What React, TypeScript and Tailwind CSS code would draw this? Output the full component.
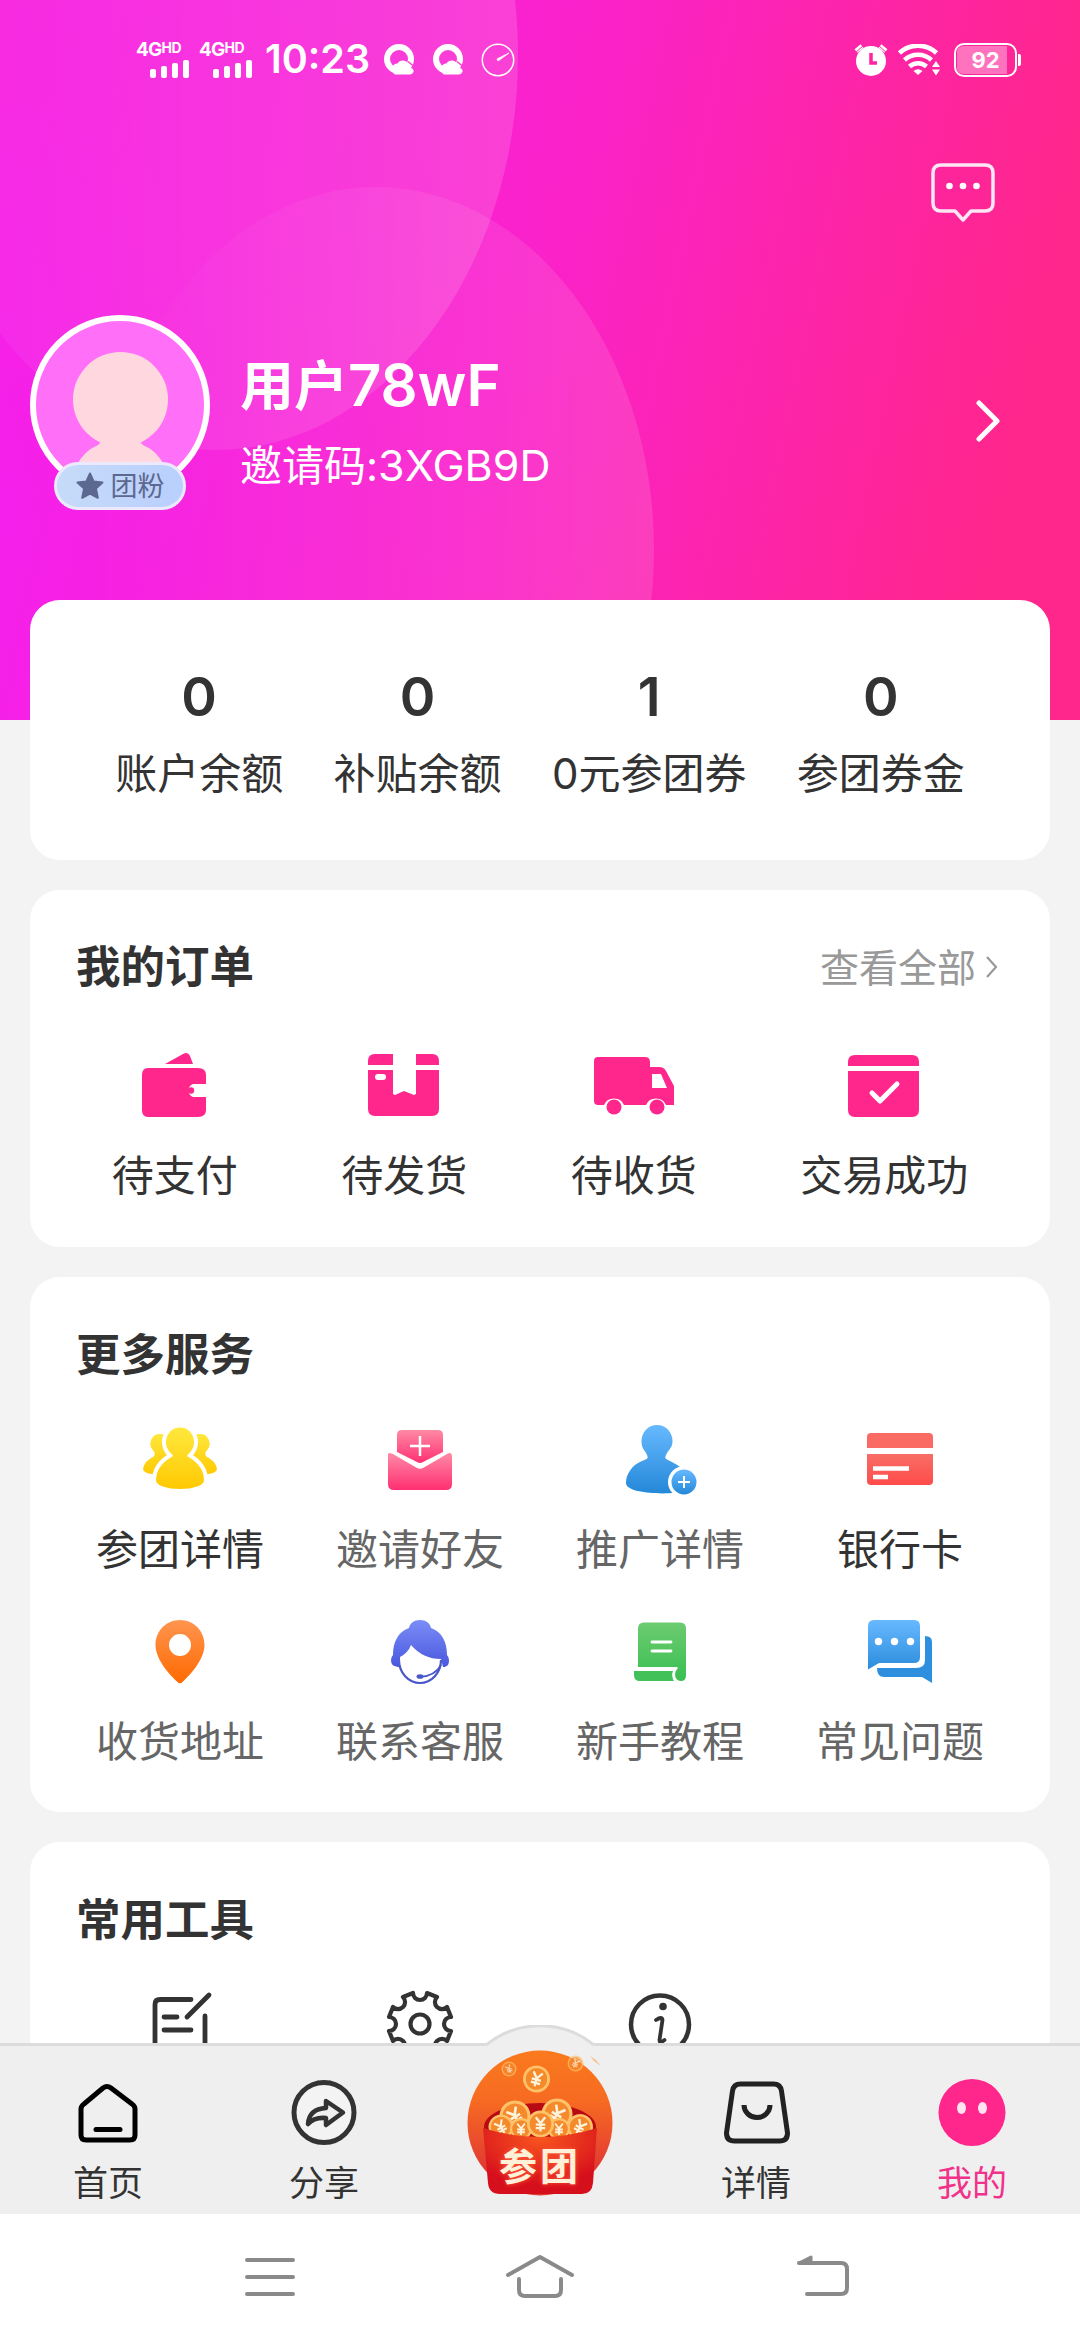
import type { ReactNode } from 'react';
import { clsx } from 'clsx';

const PINK = '#ff268c';

function Gradient({ id, from, to }: { id: string; from: string; to: string }) {
  return (
    <defs>
      <linearGradient id={id} x1="0" y1="0" x2="0" y2="1">
        <stop offset="0" stopColor={from} />
        <stop offset="1" stopColor={to} />
      </linearGradient>
    </defs>
  );
}

/* ---------- status bar ---------- */

function Signal() {
  return (
    <div className="flex h-[36px] w-[56px] flex-col justify-between text-white">
      <div className="flex h-[15px] items-start">
        <span className="text-[19px] leading-[16px] font-bold tracking-[-0.8px]">4G</span>
        <span className="text-[14px] leading-[12px] font-bold tracking-[-0.5px]">HD</span>
      </div>
      <div className="ml-[14px] flex items-end gap-[5px]">
        <i className="h-[9px] w-[6px] rounded-[2px] bg-white" />
        <i className="h-[12px] w-[6px] rounded-[2px] bg-white" />
        <i className="h-[15px] w-[6px] rounded-[2px] bg-white" />
        <i className="h-[18px] w-[6px] rounded-[2px] bg-white" />
      </div>
    </div>
  );
}

function BrowserIcon() {
  return (
    <svg width="30" height="31" viewBox="0 0 30 31" fill="none">
      <circle cx="15" cy="15" r="12" stroke="#fff" strokeWidth="6" />
      <path d="M11 30.500a6 6 0 0 1 0-10.500q1-.6 2.500-.5a6 6 0 0 1 10.500 0l3 4.500q3 1 2.500 3.500t-4 3z" fill="#fff" />
      <path d="M24 17.500l6 5" stroke="#fa40d6" strokeWidth="1.500" />
    </svg>
  );
}

function StatusBar() {
  return (
    <div className="flex h-[119px] items-center pr-[63px] pl-[136px]">
      <Signal />
      <div className="w-[7px]" />
      <Signal />
      <span className="ml-[10px] w-[108px] text-[39.5px] leading-none font-semibold whitespace-nowrap text-white">10:23</span>
      <div className="ml-[11px] flex items-center">
        <BrowserIcon />
        <div className="w-[19px]" />
        <BrowserIcon />
        <svg className="ml-[18px]" width="34" height="34" viewBox="0 0 34 34" fill="none">
          <circle cx="17" cy="17" r="15.700" stroke="#fff" strokeWidth="1.500" />
          <path d="M16 16l12-6-11 8z" fill="#fff" stroke="#fff" strokeWidth=".8" />
        </svg>
      </div>
      <div className="ml-auto flex items-center">
        <svg width="34" height="32" viewBox="0 0 34 32" fill="none">
          <circle cx="17" cy="17" r="15" fill="#fff" />
          <path d="M2 7l6-5M32 7l-6-5" stroke="#fff" strokeWidth="4.500" />
          <path d="M0 10l10-9M34 10L24 1" stroke="#ff24a4" strokeWidth="1" />
          <path d="M17 9v10h6" stroke="#ff24a4" strokeWidth="3.500" />
        </svg>
        <svg className="ml-[10px]" width="42" height="32" viewBox="0 0 42 32" fill="none">
          <g stroke="#fff" strokeWidth="4.500">
            <path d="M1.500 9a27 27 0 0 1 37 0" />
            <path d="M6.500 16a20 20 0 0 1 27 0" />
            <path d="M11.500 22.500a12.500 12.500 0 0 1 17 0" />
          </g>
          <path d="M15.500 27q4.500-3.500 9 0L20 31z" fill="#fff" />
          <path d="M34 23l4-6 4 6zM34 25.500h8l-4 6z" fill="#fff" />
        </svg>
        <div className="relative ml-[14px] flex h-[34px] w-[63px] items-center justify-center rounded-[10px] border-[2.5px] border-white p-px">
          <div className="absolute inset-y-[1px] left-[1px] w-[50px] rounded-l-[6px] bg-[#ff72bd]" />
          <div className="absolute top-[9px] -right-[6px] h-[12px] w-[3px] rounded-r-[2px] bg-white" />
          <span className="relative text-[22px] leading-none font-bold text-white">92</span>
        </div>
      </div>
    </div>
  );
}

/* ---------- header ---------- */

function HeaderBackdrop() {
  return (
    <svg className="absolute inset-0" width="1080" height="720" viewBox="0 0 1080 720">
      <defs>
        <linearGradient id="hero" gradientUnits="userSpaceOnUse" x1="20" y1="250" x2="1010" y2="460">
          <stop offset="0" stopColor="#f520ee" />
          <stop offset=".5" stopColor="#fa22ca" />
          <stop offset="1" stopColor={PINK} />
        </linearGradient>
        <radialGradient id="glow" gradientUnits="userSpaceOnUse" cx="0" cy="0" r="520">
          <stop offset="0" stopColor="#ff22b0" stopOpacity=".25" />
          <stop offset="1" stopColor="#ff22b0" stopOpacity="0" />
        </radialGradient>
        <linearGradient id="bubble" x1="0" y1=".5" x2="1" y2=".5">
          <stop offset="0" stopColor="#fff" stopOpacity=".03" />
          <stop offset="1" stopColor="#fff" stopOpacity=".14" />
        </linearGradient>
        <linearGradient id="bubble2" x1="0" y1=".5" x2="1" y2=".5">
          <stop offset="0" stopColor="#fff" stopOpacity="0" />
          <stop offset="1" stopColor="#fff" stopOpacity=".12" />
        </linearGradient>
      </defs>
      <rect width="1080" height="720" fill="url(#hero)" />
      <rect width="1080" height="720" fill="url(#glow)" />
      <ellipse cx="215" cy="55" rx="303" ry="395" fill="url(#bubble)" />
      <ellipse cx="376" cy="550" rx="278" ry="363" fill="url(#bubble2)" />
    </svg>
  );
}

function Avatar() {
  return (
    <div className="relative h-[195px] w-[180px]">
      <svg width="180" height="180" viewBox="0 0 180 180">
        <clipPath id="face">
          <circle cx="90" cy="90" r="86" />
        </clipPath>
        <circle cx="90" cy="90" r="87" fill="#ff6ff8" />
        <g clipPath="url(#face)" fill="#ffd8df">
          <circle cx="90.500" cy="84.500" r="47.500" />
          <path d="M68 122h45q-4 6 0 8 14 6 21 20v30H47v-30q7-14 21-20 4-2 0-8z" />
        </g>
        <circle cx="90" cy="90" r="87" fill="none" stroke="#fff" strokeWidth="6" />
      </svg>
      <div className="absolute top-[147px] left-[24px] flex h-[48px] w-[132px] items-center justify-center gap-[7px] rounded-full border-[3px] border-[#ece9ff] bg-linear-to-r from-[#c6dbf8] to-[#b9cffd]">
        <svg width="28" height="28" viewBox="0 0 28 28">
          <path
            d="M14 1.500l3.600 8 8.900 1-6.600 6 1.900 9.300-7.800-4.300-7.800 4.300 1.900-9.300-6.600-6 8.900-1z"
            fill="#5d6890"
            stroke="#5d6890"
            strokeWidth="2"
            strokeLinejoin="round"
          />
        </svg>
        <span className="text-[27px] leading-none text-[#5d6890]">团粉</span>
      </div>
    </div>
  );
}

function Header() {
  return (
    <header className="relative h-[600px] shrink-0">
      <HeaderBackdrop />
      <div className="relative flex h-full flex-col">
        <StatusBar />
        <div className="flex h-[196px] justify-end pt-[43px] pr-[84px]">
          <svg width="66" height="62" viewBox="0 0 66 62" fill="none">
            <path
              d="M11 3h44q8 0 8 8v30q0 8-8 8H41l-8 9-8-9H11q-8 0-8-8V11q0-8 8-8z"
              stroke="#ffe6f4"
              strokeWidth="3.500"
              strokeLinejoin="round"
            />
            <g fill="#fff">
              <circle cx="19.500" cy="24" r="3.300" />
              <circle cx="33" cy="24" r="3.300" />
              <circle cx="46.500" cy="24" r="3.300" />
            </g>
          </svg>
        </div>
        <div className="flex pr-[79px] pl-[30px]">
          <Avatar />
          <div className="ml-[30px] flex flex-col text-white">
            <div className="mt-[41px] h-[62px] text-[54px] leading-[62px] font-semibold">
              用户<span className="text-[58px] leading-[0px]">78wF</span>
            </div>
            <div className="mt-[22px] h-[52px] text-[42px] leading-[52px]">
              邀请码:<span className="text-[43px] leading-[0px]">3XGB9D</span>
            </div>
          </div>
          <svg className="mt-[85px] ml-auto" width="26" height="42" viewBox="0 0 26 42" fill="none">
            <path d="M4 3l18 18L4 39" stroke="#fff" strokeWidth="5" strokeLinecap="round" strokeLinejoin="round" />
          </svg>
        </div>
      </div>
    </header>
  );
}

/* ---------- cards ---------- */

function Card({ className, children }: { className?: string; children: ReactNode }) {
  return <section className={clsx('relative mx-[30px] shrink-0 rounded-[30px] bg-white', className)}>{children}</section>;
}

function Title({ children }: { children: ReactNode }) {
  return <h2 className="text-[44.5px] leading-[60px] font-semibold text-[#333]">{children}</h2>;
}

const stats = [
  { value: '0', label: '账户余额' },
  { value: '0', label: '补贴余额' },
  { value: '1', label: '0元参团券' },
  { value: '0', label: '参团券金' },
];

function Stats() {
  return (
    <Card className="flex h-[260px] justify-around px-[60px] pt-[67px]">
      {stats.map((s) => (
        <div key={s.label} className="flex flex-col items-center text-[#333]">
          <span className="text-[54px] leading-[60px] font-semibold">{s.value}</span>
          <span className="mt-[19px] text-[42px] leading-[56px]">{s.label}</span>
        </div>
      ))}
    </Card>
  );
}

const orders = [
  {
    label: '待支付',
    icon: (
      <g fill={PINK}>
        <path d="M31 19L49 9q5-2.500 7 2l3 8z" />
        <path d="M14 23h50q8 0 8 7v9H59a7 7 0 0 0 0 13h13v13q0 7-8 7H14q-6 0-6-7V30q0-7 6-7z" />
        <circle cx="57" cy="45.500" r="3.200" />
      </g>
    ),
  },
  {
    label: '待发货',
    icon: (
      <g fill={PINK}>
        <path d="M12 9h18v11H5v-4q0-7 7-7zM53 9h16q7 0 7 7v4H53z" />
        <path
          fillRule="evenodd"
          d="M5 25h25v24l2 1 9-4 10 4 2-1V25h23v39q0 7-7 7H12q-7 0-7-7zm10 4h5q3 0 3 3t-3 3h-5q-3 0-3-3t3-3z"
        />
      </g>
    ),
  },
  {
    label: '待收货',
    icon: (
      <g fill={PINK}>
        <path
          fillRule="evenodd"
          d="M5 12h47q5 0 5 5v5h9q5 0 7 4l8 15v19H73a11 11 0 0 0-20 0H31a11 11 0 0 0-20 0H5q-4 0-4-4V16q0-4 4-4zm54 17v14h15l-6-14z"
        />
        <circle cx="21" cy="62" r="7.500" />
        <circle cx="64" cy="62" r="7.500" />
      </g>
    ),
  },
  {
    label: '交易成功',
    icon: (
      <>
        <path d="M12 10h57q7 0 7 7v4H5v-4q0-7 7-7zM5 26h71v39q0 7-7 7H12q-7 0-7-7z" fill={PINK} />
        <path d="M29 48l8 8 17-17" fill="none" stroke="#fff" strokeWidth="5" strokeLinecap="round" strokeLinejoin="round" />
      </>
    ),
  },
];

function Orders() {
  return (
    <Card className="mt-[30px] h-[357px] pt-[47px]">
      <div className="flex items-center justify-between pr-[51px] pl-[46px]">
        <Title>我的订单</Title>
        <div className="flex items-center text-[39px] leading-none text-[#999]">
          查看全部
          <svg className="ml-[9px]" width="14" height="24" viewBox="0 0 14 24" fill="none">
            <path d="M2 2l9 10-9 10" stroke="#999" strokeWidth="2.200" />
          </svg>
        </div>
      </div>
      <div className="flex justify-around px-[30px] pt-[48px]">
        {orders.map((o) => (
          <div key={o.label} className="flex flex-col items-center text-[42px] leading-[56px] text-[#333]">
            <svg width="82" height="80" viewBox="0 0 82 80">
              {o.icon}
            </svg>
            <span className="mt-[23px]">{o.label}</span>
          </div>
        ))}
      </div>
    </Card>
  );
}

const services = [
  {
    label: '参团详情',
    dark: true,
    icon: (
      <>
        <Gradient id="yellow" from="#ffe93f" to="#ffc800" />
        <g fill="url(#yellow)" stroke="#fff" strokeWidth="4">
          <path d="M21 12c-11-1-16 12-10 19 3 3 2 4-2 6-7 4-9 12-7 15 4 5 17 5 27 3l6-36q-7-7-14-7z" />
          <path d="M59 12c11-1 16 12 10 19-3 3-2 4 2 6 7 4 9 12 7 15-4 5-17 5-27 3l-6-36q7-7 14-7z" />
          <path d="M40 5.500c-10 0-16 8-16 17 0 6 3 10 6 13-10 6-16 14-16 25 0 14 52 14 52 0 0-11-6-19-16-25 3-3 6-7 6-13 0-9-6-17-16-17z" />
        </g>
      </>
    ),
  },
  {
    label: '邀请好友',
    icon: (
      <>
        <Gradient id="rose" from="#ff8aa5" to="#ff2f72" />
        <path d="M22 10h36q5 0 5 5v17L43 42q-3 2-6 0L17 32V15q0-5 5-5z" fill="url(#rose)" />
        <path d="M9 33q2 0 4 1l24 14q3 1.500 6 0l24-14q5-3 5 3v27q0 6-6 6H14q-6 0-6-6V35q0-2 1-2z" fill="url(#rose)" />
        <path d="M40 16v20M30 26h20" stroke="#fff" strokeWidth="2.500" />
      </>
    ),
  },
  {
    label: '推广详情',
    icon: (
      <>
        <Gradient id="blue" from="#67b9ff" to="#2488d8" />
        <path
          d="M37 5c-9 0-15.500 7.500-15.500 16 0 6 2 8 4.500 12 3 5 2 6-4 8C12 45 6 54 6 63c0 12 50 12 56 8V48q-6-4-12-7c-5-2-6-3-3-8 2.500-4 5.500-6 5.500-12C52.500 12.500 46 5 37 5z"
          fill="url(#blue)"
        />
        <circle cx="64" cy="62" r="16" fill="#fff" />
        <circle cx="64" cy="62" r="12.500" fill="url(#blue)" />
        <path d="M64 56v12M58 62h12" stroke="#fff" strokeWidth="2" />
      </>
    ),
  },
  {
    label: '银行卡',
    dark: true,
    icon: (
      <>
        <Gradient id="red" from="#f86e66" to="#ff4b4b" />
        <path d="M11 13h58q4 0 4 4v11H7V17q0-4 4-4z" fill="#f96b63" />
        <path d="M7 34h66v27q0 4-4 4H11q-4 0-4-4z" fill="url(#red)" />
        <path d="M13 48.500h36M13 57h15" stroke="#fff" strokeWidth="4.500" />
      </>
    ),
  },
  {
    label: '收货地址',
    icon: (
      <>
        <Gradient id="orange" from="#ff9550" to="#ff6a00" />
        <path
          d="M40 8C26 8 15.500 19 15.500 33c0 13 12 28 22 37q2.500 2.500 5 0c10-9 22-24 22-37C64.500 19 54 8 40 8zm0 14a11 11 0 1 1 0 22 11 11 0 0 1 0-22z"
          fillRule="evenodd"
          fill="url(#orange)"
        />
      </>
    ),
  },
  {
    label: '联系客服',
    icon: (
      <>
        <Gradient id="indigo" from="#7b8df8" to="#4a58dd" />
        <path d="M19 48a21 23 0 0 0 42 0" fill="none" stroke="#4a57c8" strokeWidth="2.200" />
        <path
          d="M40 8c6 0 10 3 11 8 11 4 16 14 16 27q2 2 2 5c0 5-2 7-6 7l-2-8Q43 47 31 33q-3 8-11 12v10c-6 0-9-2-9-7q0-3 2-5c0-13 5-23 16-27 1-5 5-8 11-8z"
          fill="url(#indigo)"
        />
        <path d="M61 53q-6 11-21 12" fill="none" stroke="#4a57c8" strokeWidth="1.600" />
        <ellipse cx="40" cy="64.500" rx="3.500" ry="2.300" fill="#4a57c8" />
      </>
    ),
  },
  {
    label: '新手教程',
    icon: (
      <>
        <Gradient id="green" from="#6ccb70" to="#3abf52" />
        <path d="M24 10.500h36q6 0 6 6V63q0 6-5 6-6 0-6-7 0-3 3-6l-1-1H18V16.500q0-6 6-6z" fill="url(#green)" />
        <path d="M14 59h39q-2 5 1 10H20q-6 0-6-6z" fill="#42c158" />
        <path d="M32 30h19M32 39h19" stroke="#fff" strokeWidth="2.800" strokeLinecap="round" />
      </>
    ),
  },
  {
    label: '常见问题',
    icon: (
      <>
        <Gradient id="sky" from="#67b9ff" to="#2c8cdc" />
        <path d="M14 8h40q6 0 6 6v31q0 6-6 6H19L8 57.500V14q0-6 6-6z" fill="url(#sky)" />
        <path d="M65 24q7 0 7 6v41l-10-6H24q-7 0-7-9h39q9 0 9-8z" fill="#2e8fdf" />
        <g fill="#fff">
          <circle cx="18.500" cy="29.500" r="3.700" />
          <circle cx="34.500" cy="29.500" r="3.700" />
          <circle cx="50.500" cy="29.500" r="3.700" />
        </g>
      </>
    ),
  },
];

function Services() {
  return (
    <Card className="mt-[30px] h-[535px] pt-[48px]">
      <div className="pl-[46px]">
        <Title>更多服务</Title>
      </div>
      <div className="grid grid-cols-4 gap-y-[24px] px-[30px] pt-[35px]">
        {services.map((s) => (
          <div key={s.label} className="flex h-[168px] flex-col items-center">
            <svg width="80" height="80" viewBox="0 0 80 80">
              {s.icon}
            </svg>
            <span className={clsx('mt-[22px] text-[42px] leading-[56px]', s.dark ? 'text-[#333]' : 'text-[#666]')}>
              {s.label}
            </span>
          </div>
        ))}
      </div>
    </Card>
  );
}

// eight-notch cog, centred on 0,0
const COG =
  'M-7-31A7 7 0 0 0 7-31L17-27A7 7 0 0 0 27-17L31-7A7 7 0 0 0 31 7L27 17A7 7 0 0 0 17 27L7 31A7 7 0 0 0-7 31L-17 27A7 7 0 0 0-27 17L-31 7A7 7 0 0 0-31-7L-27-17A7 7 0 0 0-17-27Z';

function Tools() {
  return (
    <Card className="mt-[30px] h-[400px] pt-[48px]">
      <div className="pl-[46px]">
        <Title>常用工具</Title>
      </div>
      <div className="grid grid-cols-4 justify-items-center px-[30px] pt-[34px]">
        <svg width="80" height="80" viewBox="0 0 80 80" fill="none" stroke="#333" strokeWidth="4.800" strokeLinecap="round">
          <path d="M51 15.500H20q-5 0-5 5V68h50V32" />
          <path d="M24 33h13M24 46h27M69 11L47 33" />
        </svg>
        <svg width="80" height="80" viewBox="-40 -40 80 80" fill="none" stroke="#333" strokeWidth="4.200" strokeLinejoin="round">
          <path d={COG} />
          <circle r="9.500" />
        </svg>
        <svg width="80" height="80" viewBox="0 0 80 80" fill="none" stroke="#333" strokeWidth="4.500" strokeLinecap="round">
          <circle cx="40" cy="40.500" r="29" />
          <circle cx="43" cy="22.500" r="3.800" fill="#333" stroke="none" />
          <path d="M36 36q6-4 6.500 0l-3 20q0 4 5 0" strokeWidth="3.800" />
        </svg>
      </div>
    </Card>
  );
}

/* ---------- bottom bars ---------- */

function Coin({ x, y, r, turn = 0 }: { x: number; y: number; r: number; turn?: number }) {
  return (
    <g transform={`translate(${x} ${y}) rotate(${turn}) scale(${r / 10})`}>
      <circle r="9" fill="#f58a2c" stroke="#ffc269" strokeWidth="2" />
      <path d="M-3.500-5L0-.5 3.500-5M0-.5V5.500M-3.500.500h7M-3.500 3h7" stroke="#fff3dc" strokeWidth="1.700" fill="none" />
    </g>
  );
}

function GroupBuyButton() {
  return (
    <div className="relative h-[150px] w-[150px]">
      <svg width="150" height="150" viewBox="0 0 150 150">
        <defs>
          <linearGradient id="sun" x1="0" y1="0" x2="0" y2="1">
            <stop offset="0" stopColor="#fa7a1c" />
            <stop offset=".35" stopColor="#f66a22" />
            <stop offset=".8" stopColor="#e23a32" />
          </linearGradient>
          <radialGradient id="pot" cx=".5" cy=".15" r=".7">
            <stop offset="0" stopColor="#f8551f" />
            <stop offset="1" stopColor="#d60f1c" />
          </radialGradient>
        </defs>
        <circle cx="75" cy="76" r="72.500" fill="url(#sun)" />
        <ellipse cx="75" cy="80" rx="56" ry="24" fill="#b80a12" />
        <g opacity=".7">
          <Coin x={44} y={22} r={7.5} turn={-25} />
          <Coin x={110.500} y={16.500} r={8} turn={25} />
        </g>
        <Coin x={71.500} y={32} r={13.500} turn={15} />
        <Coin x={50} y={69} r={15.500} turn={-30} />
        <Coin x={92} y={67} r={15.500} turn={30} />
        <Coin x={36} y={80} r={12.500} turn={-30} />
        <Coin x={115} y={80} r={13} turn={30} />
        <Coin x={56} y={82} r={11} />
        <Coin x={94} y={82} r={11} />
        <Coin x={75.500} y={77} r={13.500} />
        <path d="M125 9l6 4 5 6-7-5z" fill="#f7c08e" />
        <path d="M18 81q57 18 114 0l-4 55q-1 11-11 11H35q-11 0-12-11z" fill="url(#pot)" />
      </svg>
      <span className="absolute inset-x-0 top-[99px] text-center text-[38px] leading-[40px] font-bold tracking-[3px] text-[#fff0d8] [text-shadow:0_0_5px_#ff5a3c]">
        参团
      </span>
    </div>
  );
}

const tabIcons = {
  home: (
    <>
      <path
        d="M28 11q4-3 8 0l21 16q3 2 3 5v26q0 5-5 5H11q-5 0-5-5V32q0-3 3-5z"
        transform="translate(-1 -3)"
        stroke="#000"
        strokeWidth="5"
      />
      <path d="M20 49.500h24" stroke="#000" strokeWidth="5" strokeLinecap="round" />
    </>
  ),
  share: (
    <>
      <circle cx="32" cy="32.500" r="30" stroke="#333" strokeWidth="5" fill="#f3f3f3" />
      <path
        d="M34 21l17 11.500L34 45v-7q-12-1-18 6 1-15 18-16z"
        stroke="#333"
        strokeWidth="4.500"
        strokeLinejoin="round"
        fill="#efefef"
      />
    </>
  ),
  detail: (
    <>
      <path
        d="M17 4h33q7 0 8 7l6 42q0 8-8 8H11q-8 0-8-8L9 11q1-7 8-7z"
        stroke="#222"
        strokeWidth="5"
        transform="translate(-.5 0)"
      />
      <path d="M20 25a13 12.500 0 0 0 26 0" stroke="#222" strokeWidth="5" />
    </>
  ),
  mine: (
    <>
      <circle cx="32" cy="32.500" r="33.500" fill={PINK} />
      <ellipse cx="21.500" cy="28" rx="4.500" ry="6" fill="#ffe3f1" />
      <ellipse cx="42.500" cy="28" rx="4.500" ry="6" fill="#ffe3f1" />
    </>
  ),
};

function Tab({ icon, label, active }: { icon: ReactNode; label: string; active?: boolean }) {
  return (
    <button className="flex flex-1 flex-col items-center pt-[34px]">
      <svg className="overflow-visible" width="64" height="64" viewBox="0 0 64 64" fill="none">
        {icon}
      </svg>
      <span className={clsx('mt-[17px] text-[35px] leading-[44px]', active ? 'text-[#f2318b]' : 'text-[#333]')}>{label}</span>
    </button>
  );
}

function TabBar() {
  return (
    <nav className="relative flex h-[171px] shrink-0 border-t-[3px] border-[#dcdcdc] bg-[#efefef]">
      {/* raised bump behind the centre button */}
      <svg className="absolute -top-[21px] left-[453px]" width="174" height="60" viewBox="0 0 174 60">
        <path d="M32 21a86 86 0 0 1 110 0v39H32z" fill="#efefef" />
        <path d="M33 20a85.500 85.500 0 0 1 108 0" fill="none" stroke="#dcdcdc" strokeWidth="3" />
      </svg>
      <Tab icon={tabIcons.home} label="首页" />
      <Tab icon={tabIcons.share} label="分享" />
      <div className="relative flex flex-1 justify-center pt-[1px]">
        <GroupBuyButton />
      </div>
      <Tab icon={tabIcons.detail} label="详情" />
      <Tab icon={tabIcons.mine} label="我的" active />
    </nav>
  );
}

function SystemNav() {
  return (
    <div className="grid h-[126px] shrink-0 grid-cols-3 place-items-center bg-white px-[135px]">
      <svg width="72" height="50" viewBox="0 0 72 50" stroke="#8a8a8a" strokeWidth="4" strokeLinecap="round">
        <path d="M13 8h46M13 25h46M13 42h46" />
      </svg>
      <svg width="72" height="50" viewBox="0 0 72 50" fill="none" stroke="#8a8a8a" strokeWidth="4" strokeLinecap="round" strokeLinejoin="round">
        <path d="M4 23L36 5l32 18" />
        <path d="M15 27v11q0 6 6 6h30q6 0 6-6V27" />
      </svg>
      <svg
        className="ml-[26px]"
        width="72"
        height="50"
        viewBox="0 0 72 50"
        fill="none"
        stroke="#8a8a8a"
        strokeWidth="4"
        strokeLinecap="round"
        strokeLinejoin="round"
      >
        <path d="M12 11h42q6 0 6 6v19q0 6-6 6H20" />
        <path d="M12 11l12-6v6z" fill="#8a8a8a" strokeWidth="3" />
      </svg>
    </div>
  );
}

export default function App() {
  return (
    <div className="flex h-[2340px] w-[1080px] flex-col overflow-hidden bg-[#f3f3f3] font-['Inter','Noto_Sans_CJK_SC',sans-serif]">
      <main className="flex h-[2043px] flex-col overflow-hidden">
        <Header />
        <Stats />
        <Orders />
        <Services />
        <Tools />
      </main>
      <TabBar />
      <SystemNav />
    </div>
  );
}
